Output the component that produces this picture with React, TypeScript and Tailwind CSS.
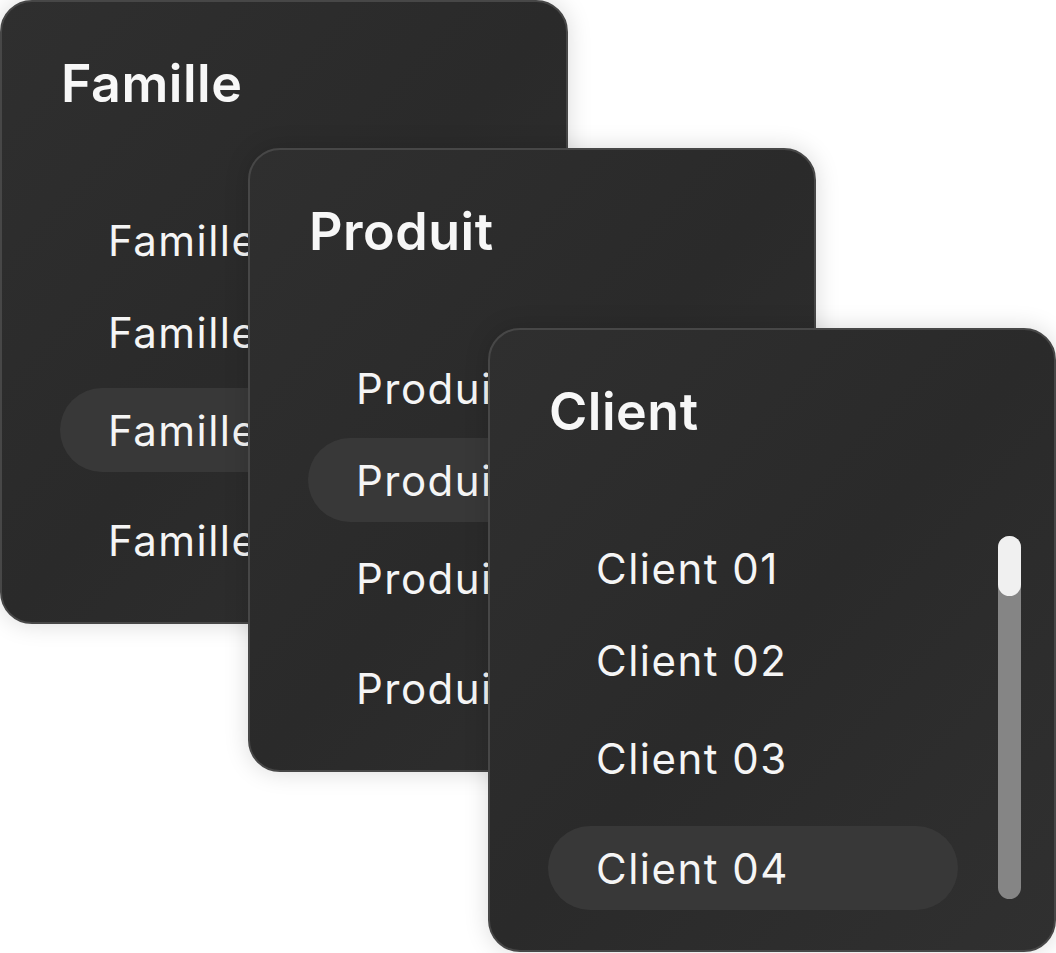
const cards = [
  {
    title: "Famille",
    items: ["Famille 01", "Famille 02", "Famille 03", "Famille 04"],
    active: 2,
    pos: "left-0 top-0 z-10",
    scroll: false,
  },
  {
    title: "Produit",
    items: ["Produit 01", "Produit 02", "Produit 03", "Produit 04"],
    active: 1,
    pos: "left-[248px] top-[148px] z-20",
    scroll: false,
  },
  {
    title: "Client",
    items: ["Client 01", "Client 02", "Client 03", "Client 04"],
    active: 3,
    pos: "left-[488px] top-[328px] z-30",
    scroll: true,
  },
]

// spacing between rows isn't uniform in the mockup
const rowMargins = ["mt-[84px]", "mt-[8px]", "mt-[14px]", "mt-[26px]"]

const Card = ({ title, items, active, pos, scroll }: (typeof cards)[number]) => {
  return (
    <div
      className={`absolute ${pos} w-[568px] h-[624px] rounded-[32px] border-2 border-[#474747] bg-gradient-to-br from-[#2f2f2f] via-[#2a2a2a] to-[#303030] overflow-hidden shadow-[0_0_24px_rgba(0,0,0,0.15)]`}
    >
      {/* Title */}
      <div className="pt-[52px] pl-[59px] h-[112px] text-[52px] leading-[60px] font-semibold text-[#f7f7f7] tracking-[0.01em]">
        {title}
      </div>

      {/* List */}
      <div className="flex flex-col">
        {items.map((item, i) => (
          <div
            key={item}
            className={`${rowMargins[i]} ml-[58px] w-[410px] h-[84px] flex items-center pl-[48px] rounded-full text-[42px] text-[#f5f5f5] tracking-[0.035em] ${i === active ? "bg-[#383838]" : ""}`}
          >
            {item}
          </div>
        ))}
      </div>

      {/* Scrollbar */}
      {scroll && (
        <div className="absolute left-[508px] top-[206px] w-[23px] h-[363px] rounded-full bg-[#858585]">
          <div className="w-full h-[60px] rounded-full bg-[#f0f0f0]" />
        </div>
      )}
    </div>
  )
}

const App = () => {
  return (
    <div
      className="relative w-[1056px] h-[953px] bg-white overflow-hidden"
      style={{ fontFamily: "Inter, 'Noto Sans', sans-serif" }}
    >
      {cards.map((c) => (
        <Card key={c.title} {...c} />
      ))}
    </div>
  )
}

export default App
